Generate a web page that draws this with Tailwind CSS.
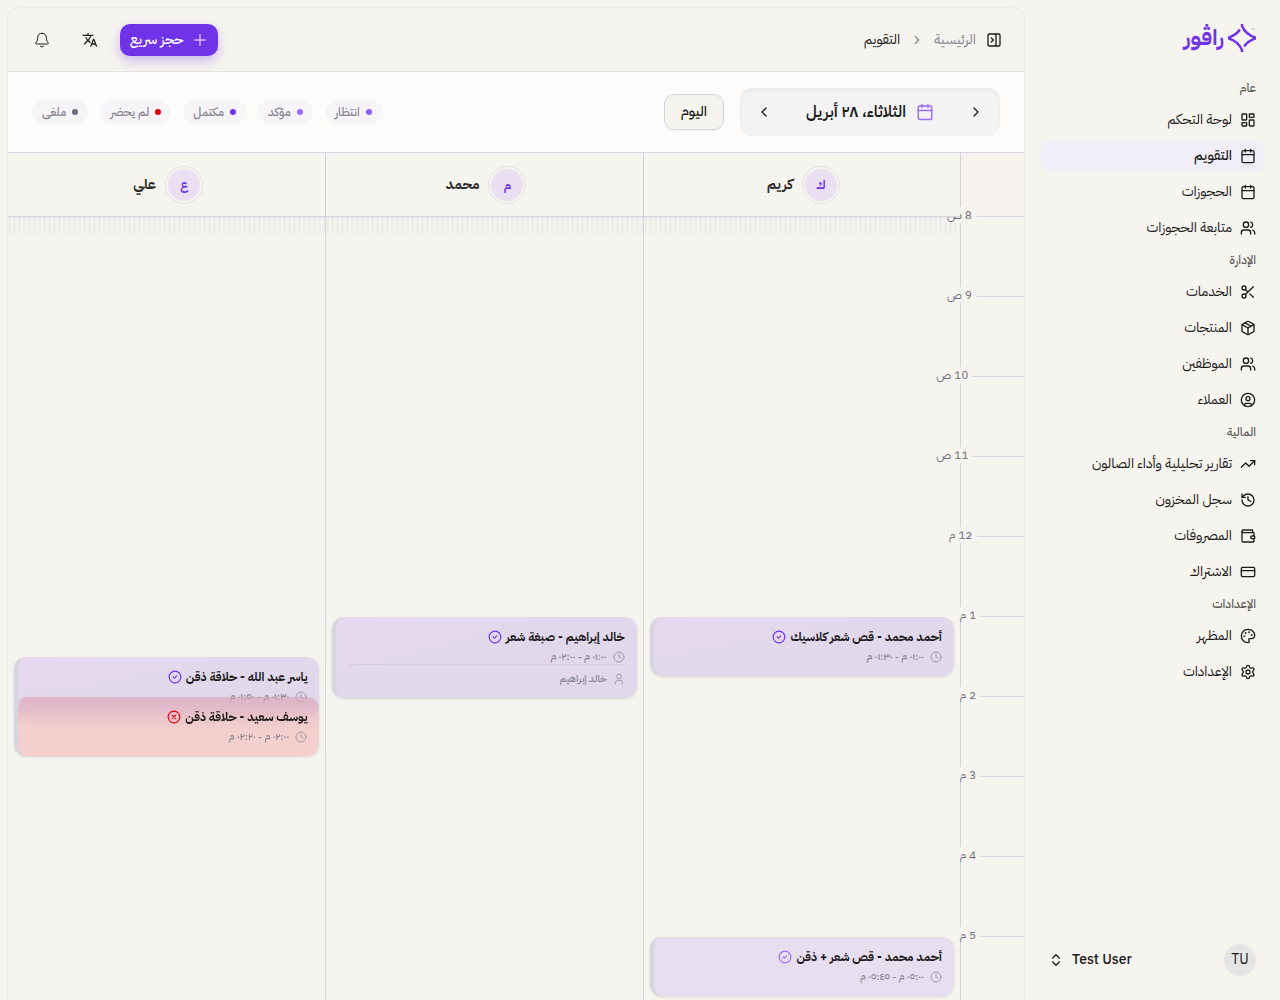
<!DOCTYPE html>
<html lang="ar" dir="rtl">

<head>
    <meta charset="UTF-8">
    <meta name="viewport" content="width=device-width, initial-scale=1.0">
    <script src="https://cdn.jsdelivr.net/npm/@tailwindcss/browser@4"></script>
    <title>التقويم</title>
</head>

<body class="h-screen overflow-hidden bg-[#f6f4ef] text-[#1c1b1a] text-sm font-['IBM_Plex_Sans_Arabic','Noto_Sans',sans-serif]">

    <!-- Icons -->
    <svg class="hidden">
        <symbol id="i-dashboard" viewBox="0 0 24 24"><rect width="7" height="9" x="3" y="3" rx="1"/><rect width="7" height="5" x="14" y="3" rx="1"/><rect width="7" height="9" x="14" y="12" rx="1"/><rect width="7" height="5" x="3" y="16" rx="1"/></symbol>
        <symbol id="i-calendar" viewBox="0 0 24 24"><path d="M8 2v4M16 2v4M3 10h18"/><rect width="18" height="18" x="3" y="4" rx="2"/></symbol>
        <symbol id="i-users" viewBox="0 0 24 24"><path d="M16 21v-2a4 4 0 0 0-4-4H6a4 4 0 0 0-4 4v2"/><circle cx="9" cy="7" r="4"/><path d="M22 21v-2a4 4 0 0 0-3-3.87M16 3.13a4 4 0 0 1 0 7.75"/></symbol>
        <symbol id="i-scissors" viewBox="0 0 24 24"><circle cx="6" cy="6" r="3"/><path d="M8.12 8.12 12 12M20 4 8.12 15.88"/><circle cx="6" cy="18" r="3"/><path d="M14.8 14.8 20 20"/></symbol>
        <symbol id="i-package" viewBox="0 0 24 24"><path d="M11 21.73a2 2 0 0 0 2 0l7-4A2 2 0 0 0 21 16V8a2 2 0 0 0-1-1.73l-7-4a2 2 0 0 0-2 0l-7 4A2 2 0 0 0 3 8v8a2 2 0 0 0 1 1.73zM12 22V12"/><path d="M3.29 7 12 12l8.71-5M7.5 4.27l9 5.15"/></symbol>
        <symbol id="i-client" viewBox="0 0 24 24"><circle cx="12" cy="12" r="10"/><circle cx="12" cy="10" r="3"/><path d="M7 20.662V19a2 2 0 0 1 2-2h6a2 2 0 0 1 2 2v1.662"/></symbol>
        <symbol id="i-trend" viewBox="0 0 24 24"><path d="M16 7h6v6"/><path d="m22 7-8.5 8.5-5-5L2 17"/></symbol>
        <symbol id="i-history" viewBox="0 0 24 24"><path d="M3 12a9 9 0 1 0 9-9 9.75 9.75 0 0 0-6.74 2.74L3 8"/><path d="M3 3v5h5M12 7v5l4 2"/></symbol>
        <symbol id="i-wallet" viewBox="0 0 24 24"><path d="M19 7V4a1 1 0 0 0-1-1H5a2 2 0 0 0 0 4h15a1 1 0 0 1 1 1v4h-3a2 2 0 0 0 0 4h3a1 1 0 0 0 1-1v-2a1 1 0 0 0-1-1"/><path d="M3 5v14a2 2 0 0 0 2 2h15a1 1 0 0 0 1-1v-4"/></symbol>
        <symbol id="i-card" viewBox="0 0 24 24"><rect width="20" height="14" x="2" y="5" rx="2"/><path d="M2 10h20"/></symbol>
        <symbol id="i-palette" viewBox="0 0 24 24"><path d="M12 22a1 1 0 0 1 0-20 10 9 0 0 1 10 9 5 5 0 0 1-5 5h-2.25a1.75 1.75 0 0 0-1.4 2.8l.3.4a1.75 1.75 0 0 1-1.4 2.8z"/><circle cx="13.5" cy="6.5" r=".5" fill="currentColor"/><circle cx="17.5" cy="10.5" r=".5" fill="currentColor"/><circle cx="6.5" cy="12.5" r=".5" fill="currentColor"/><circle cx="8.5" cy="7.5" r=".5" fill="currentColor"/></symbol>
        <symbol id="i-settings" viewBox="0 0 24 24"><path d="M9.671 4.136a2.34 2.34 0 0 1 4.659 0 2.34 2.34 0 0 0 3.319 1.915 2.34 2.34 0 0 1 2.33 4.033 2.34 2.34 0 0 0 0 3.831 2.34 2.34 0 0 1-2.33 4.033 2.34 2.34 0 0 0-3.319 1.915 2.34 2.34 0 0 1-4.659 0 2.34 2.34 0 0 0-3.32-1.915 2.34 2.34 0 0 1-2.33-4.033 2.34 2.34 0 0 0 0-3.831A2.34 2.34 0 0 1 6.35 6.051a2.34 2.34 0 0 0 3.319-1.915"/><circle cx="12" cy="12" r="3"/></symbol>
        <symbol id="i-panel" viewBox="0 0 24 24"><rect width="18" height="18" x="3" y="3" rx="2"/><path d="M15 3v18M8 9l3 3-3 3"/></symbol>
        <symbol id="i-right" viewBox="0 0 24 24"><path d="m9 18 6-6-6-6"/></symbol>
        <symbol id="i-left" viewBox="0 0 24 24"><path d="m15 18-6-6 6-6"/></symbol>
        <symbol id="i-updown" viewBox="0 0 24 24"><path d="m7 15 5 5 5-5M7 9l5-5 5 5"/></symbol>
        <symbol id="i-plus" viewBox="0 0 24 24"><path d="M4 12h16M12 4v16"/></symbol>
        <symbol id="i-translate" viewBox="0 0 24 24"><path fill="currentColor" stroke="none" d="m12.87 15.07-2.54-2.51.03-.03A17.52 17.52 0 0 0 14.07 6H17V4h-7V2H8v2H1v1.99h11.17C11.5 7.92 10.44 9.75 9 11.35 8.07 10.32 7.3 9.19 6.69 8h-2c.73 1.63 1.73 3.17 2.98 4.56l-5.09 5.02L4 19l5-5 3.11 3.11.76-2.04zM18.5 10h-2L12 22h2l1.12-3h4.75L21 22h2l-4.5-12zm-2.62 7 1.62-4.33L19.12 17h-3.24z"/></symbol>
        <symbol id="i-bell" viewBox="0 0 24 24"><path d="M12 2a6.5 6.5 0 0 0-6.5 6.2C5.3 12.5 4.4 14 2.8 16.2c-.6.8-.1 1.8.9 1.8h16.6c1 0 1.5-1 .9-1.8-1.6-2.2-2.5-3.7-2.7-8A6.5 6.5 0 0 0 12 2ZM9.8 21.5c1.2.9 3.2.9 4.4 0"/></symbol>
        <symbol id="i-check" viewBox="0 0 24 24"><circle cx="12" cy="12" r="10"/><path d="m9 12 2 2 4-4"/></symbol>
        <symbol id="i-cross" viewBox="0 0 24 24"><circle cx="12" cy="12" r="10"/><path d="m15 9-6 6M9 9l6 6"/></symbol>
        <symbol id="i-clock" viewBox="0 0 24 24"><circle cx="12" cy="12" r="10"/><path d="M12 6v6l4 2"/></symbol>
        <symbol id="i-user" viewBox="0 0 24 24"><circle cx="12" cy="7" r="5"/><path d="M19 22v-3a4 4 0 0 0-4-4H9a4 4 0 0 0-4 4v3"/></symbol>
    </svg>

    <div class="flex h-full">

        <!-- Sidebar -->
        <aside class="flex w-64 shrink-0 flex-col px-4 pb-4">
            <a href="#" class="flex h-18 items-center gap-1 px-2 pt-1 text-[#7033e7]">
                <svg class="size-7" viewBox="0 0 28 28" fill="none" stroke="currentColor" stroke-width="2.5">
                    <path d="M14 0V2Q17.5 10.5 28 13.8M28 14.2Q19.5 17 16.2 22.5M14 28V26Q10.5 17.5 0 14.2M0 13.8Q8.5 11 11.8 5.5" />
                    <path d="M23.5 5h3.5" stroke-width="1" opacity=".3" />
                </svg>
                <span class="text-[22px]/8 font-bold">راڤور</span>
            </a>

            <nav id="menu" class="flex flex-col"></nav>

            <button type="button" class="mt-auto flex h-12 items-center gap-2 rounded-xl px-2">
                <span class="flex size-8 items-center justify-center rounded-full bg-[#e5e5e5]">TU</span>
                <span class="flex-1 text-left font-medium">Test User</span>
                <svg class="size-4" fill="none" stroke="currentColor" stroke-width="2" stroke-linecap="round" stroke-linejoin="round"><use href="#i-updown"/></svg>
            </button>
        </aside>

        <!-- Main panel -->
        <main class="mt-2 ml-2 flex min-w-0 flex-1 flex-col overflow-hidden rounded-t-xl shadow-[0_0_3px_rgba(0,0,0,0.1)]">
            <header class="flex h-16 shrink-0 items-center justify-between border-b border-[#e5e4e2] px-4">
                <div class="flex items-center gap-1">
                    <button type="button" aria-label="إخفاء القائمة" class="flex size-7 items-center justify-center"><svg class="size-4" fill="none" stroke="currentColor" stroke-width="2" stroke-linecap="round" stroke-linejoin="round"><use href="#i-panel"/></svg></button>
                    <nav class="flex items-center gap-2.5">
                        <a href="#" class="text-[#858290]">الرئيسية</a>
                        <svg class="size-3.5 text-[#858290]" fill="none" stroke="currentColor" stroke-width="2" stroke-linecap="round" stroke-linejoin="round"><use href="#i-right"/></svg>
                        <span>التقويم</span>
                    </nav>
                </div>
                <div class="flex items-center gap-4">
                    <button type="button" class="flex h-8 items-center gap-2 rounded-[10px] bg-[#7033e7] px-2.5 font-medium text-white shadow-[0_5px_12px_rgba(112,51,231,0.3)]">
                        <svg class="size-4" fill="none" stroke="currentColor" stroke-width="1.5" stroke-linecap="round"><use href="#i-plus"/></svg>
                        حجز سريع
                    </button>
                    <button type="button" aria-label="اللغة" class="flex h-8 w-7 items-center justify-center"><svg class="size-4" fill="none"><use href="#i-translate"/></svg></button>
                    <button type="button" aria-label="الإشعارات" class="flex size-9 items-center justify-center"><svg class="size-4" fill="none" stroke="currentColor" stroke-width="1.5" stroke-linecap="round" stroke-linejoin="round"><use href="#i-bell"/></svg></button>
                </div>
            </header>

            <!-- Date bar -->
            <div class="flex shrink-0 items-center justify-between border-b border-[#d8d5e3] bg-[#fdfcfb] px-6 py-4">
                <div class="flex items-center gap-4">
                    <div class="flex h-12 w-65 items-center justify-between rounded-xl bg-[#f3f3f3] px-2 inset-shadow-sm">
                        <button type="button" aria-label="اليوم السابق" class="flex size-8 items-center justify-center"><svg class="size-4" fill="none" stroke="currentColor" stroke-width="2" stroke-linecap="round" stroke-linejoin="round"><use href="#i-right"/></svg></button>
                        <span class="flex items-center gap-2.5 text-base font-semibold">
                            <svg class="size-[18px] text-[#9b6cf5]" fill="none" stroke="currentColor" stroke-width="2" stroke-linecap="round" stroke-linejoin="round"><use href="#i-calendar"/></svg>
                            الثلاثاء، ٢٨ أبريل
                        </span>
                        <button type="button" aria-label="اليوم التالي" class="flex size-8 items-center justify-center"><svg class="size-4" fill="none" stroke="currentColor" stroke-width="2" stroke-linecap="round" stroke-linejoin="round"><use href="#i-left"/></svg></button>
                    </div>
                    <button type="button" class="h-9 rounded-[10px] border border-[#d8d5e3] bg-[#f6f4ef] px-4 font-medium shadow-xs">اليوم</button>
                </div>
                <ul class="flex items-center gap-3 text-xs font-medium text-[#858290]">
                    <li class="flex h-6 items-center gap-1.5 rounded-full bg-[#f6f4f7] px-2.5"><span class="size-1.5 rounded-full bg-[#8b5cf6]"></span>انتظار</li>
                    <li class="flex h-6 items-center gap-1.5 rounded-full bg-[#f6f4f7] px-2.5"><span class="size-1.5 rounded-full bg-[#9f67ff]"></span>مؤكد</li>
                    <li class="flex h-6 items-center gap-1.5 rounded-full bg-[#f6f4f7] px-2.5"><span class="size-1.5 rounded-full bg-[#7033e7]"></span>مكتمل</li>
                    <li class="flex h-6 items-center gap-1.5 rounded-full bg-[#f6f4f7] px-2.5"><span class="size-1.5 rounded-full bg-[#e7000b]"></span>لم يحضر</li>
                    <li class="flex h-6 items-center gap-1.5 rounded-full bg-[#f6f4f7] px-2.5"><span class="size-1.5 rounded-full bg-[#6f6b7e]"></span>ملغى</li>
                </ul>
            </div>

            <!-- Calendar -->
            <div class="flex min-h-0 flex-1">
                <div id="hours" class="flex w-16 shrink-0 flex-col border-l border-[#d8d5e3] text-xs text-[#6f6b7e]">
                    <div class="h-[63px] shrink-0 bg-[#f6f3ef]"></div>
                </div>
                <div id="columns" class="grid min-w-0 flex-1 grid-cols-3"></div>
            </div>
        </main>
    </div>

    <script>
        const icon = (name, classes) => `<svg class="shrink-0 ${classes}" fill="none" stroke="currentColor" stroke-width="2" stroke-linecap="round" stroke-linejoin="round"><use href="#i-${name}"/></svg>`;

        // Sidebar menu
        const menu = [
            { title: 'عام', items: [['dashboard', 'لوحة التحكم'], ['calendar', 'التقويم', true], ['calendar', 'الحجوزات'], ['users', 'متابعة الحجوزات']] },
            { title: 'الإدارة', items: [['scissors', 'الخدمات'], ['package', 'المنتجات'], ['users', 'الموظفين'], ['client', 'العملاء']] },
            { title: 'المالية', items: [['trend', 'تقارير تحليلية وأداء الصالون'], ['history', 'سجل المخزون'], ['wallet', 'المصروفات'], ['card', 'الاشتراك']] },
            { title: 'الإعدادات', items: [['palette', 'المظهر'], ['settings', 'الإعدادات']] },
        ];

        document.getElementById('menu').innerHTML = menu.map(group => `
            <h2 class="flex h-8 items-center px-2 text-xs font-medium text-[#5c5b58]">${group.title}</h2>
            <ul class="flex flex-col gap-1">
                ${group.items.map(([name, label, active]) => `
                    <li><a href="#" class="flex h-8 items-center gap-2 rounded-xl px-2 ${active ? 'bg-[#f1eef9] font-medium' : ''}">${icon(name, 'size-4')}${label}</a></li>
                `).join('')}
            </ul>
        `).join('');

        // Hours
        const hours = ['8 ص', '9 ص', '10 ص', '11 ص', '12 م', '1 م', '2 م', '3 م', '4 م', '5 م'];

        document.getElementById('hours').innerHTML += hours.map(hour => `
            <div class="relative z-10 h-20 shrink-0 border-t border-[#d8d5e3]"><span class="absolute right-1/2 -top-2.5 -translate-x-1/2 bg-[#f6f4ef] px-1 whitespace-nowrap">${hour}</span></div>
        `).join('');

        // Bookings by status
        const statuses = {
            completed: { card: 'bg-linear-to-br from-[#e6d8ed] to-[#e1d8ec] to-50%', icon: 'check', color: 'text-[#7033e7]' },
            confirmed: { card: 'bg-[#e7dff0]', icon: 'check', color: 'text-[#9f67ff]' },
            noShow: { card: 'bg-[#e7000b]/15 backdrop-blur-sm', icon: 'cross', color: 'text-[#e7000b]' },
        };

        const staff = [
            {
                name: 'كريم', letter: 'ك', bookings: [
                    { top: 400, height: 59, status: 'completed', title: 'أحمد محمد - قص شعر كلاسيك', time: '٠١:٠٠ م - ٠١:٣٠ م' },
                    { top: 720, height: 59, status: 'confirmed', title: 'أحمد محمد - قص شعر + ذقن', time: '٠٥:٠٠ م - ٠٥:٤٥ م' },
                ]
            },
            {
                name: 'محمد', letter: 'م', bookings: [
                    { top: 400, height: 81, status: 'completed', title: 'خالد إبراهيم - صبغة شعر', time: '٠١:٠٠ م - ٠٢:٠٠ م', client: 'خالد إبراهيم' },
                ]
            },
            {
                name: 'علي', letter: 'ع', bookings: [
                    { top: 440, height: 59, status: 'completed', title: 'ياسر عبد الله - حلاقة ذقن', time: '٠١:٣٠ م - ٠١:٥٠ م' },
                    { top: 480, height: 59, status: 'noShow', title: 'يوسف سعيد - حلاقة ذقن', time: '٠٢:٠٠ م - ٠٢:٢٠ م' },
                ]
            },
        ];

        const booking = b => {
            const s = statuses[b.status];
            return `
                <article class="absolute inset-x-1.5 rounded-xl border-l-4 border-[#d6d4de] p-3 shadow-sm ${s.card}" style="top: ${b.top}px; height: ${b.height}px">
                    <h4 class="flex items-center gap-1 text-xs/4 font-bold">${b.title}${icon(s.icon, 'size-3.5 ' + s.color)}</h4>
                    <p class="mt-1 flex items-center gap-1.5 text-[10px]/4 font-medium text-[#858290]">${icon('clock', 'size-3 opacity-70')}${b.time}</p>
                    ${b.client ? `<p class="-mt-px flex items-center gap-1.5 border-t border-[#d3cbe0] pt-1.5 text-[10px]/4 font-medium text-[#858290]">${icon('user', 'size-3 opacity-70')}${b.client}</p>` : ''}
                </article>
            `;
        };

        document.getElementById('columns').innerHTML = staff.map(person => `
            <section class="flex min-w-0 flex-col border-l border-[#d8d5e3] last:border-l-0">
                <h3 class="relative z-20 flex h-16 shrink-0 items-center justify-center gap-3 border-b border-[#d8d5e3] bg-[#f6f4ef] font-bold text-[#2e2d2b] shadow-xs">
                    <span class="flex size-8 items-center justify-center rounded-full bg-[#eae0f1] text-xs text-[#7033e7] outline outline-offset-2 outline-[#e3e1e3]">${person.letter}</span>
                    ${person.name}
                </h3>
                <div class="relative flex-1">
                    <div class="h-4 bg-[repeating-linear-gradient(90deg,#ededea_0_3px,#f6f4ef_3px_5px)]"></div>
                    ${person.bookings.map(booking).join('')}
                </div>
            </section>
        `).join('');
    </script>
</body>

</html>
